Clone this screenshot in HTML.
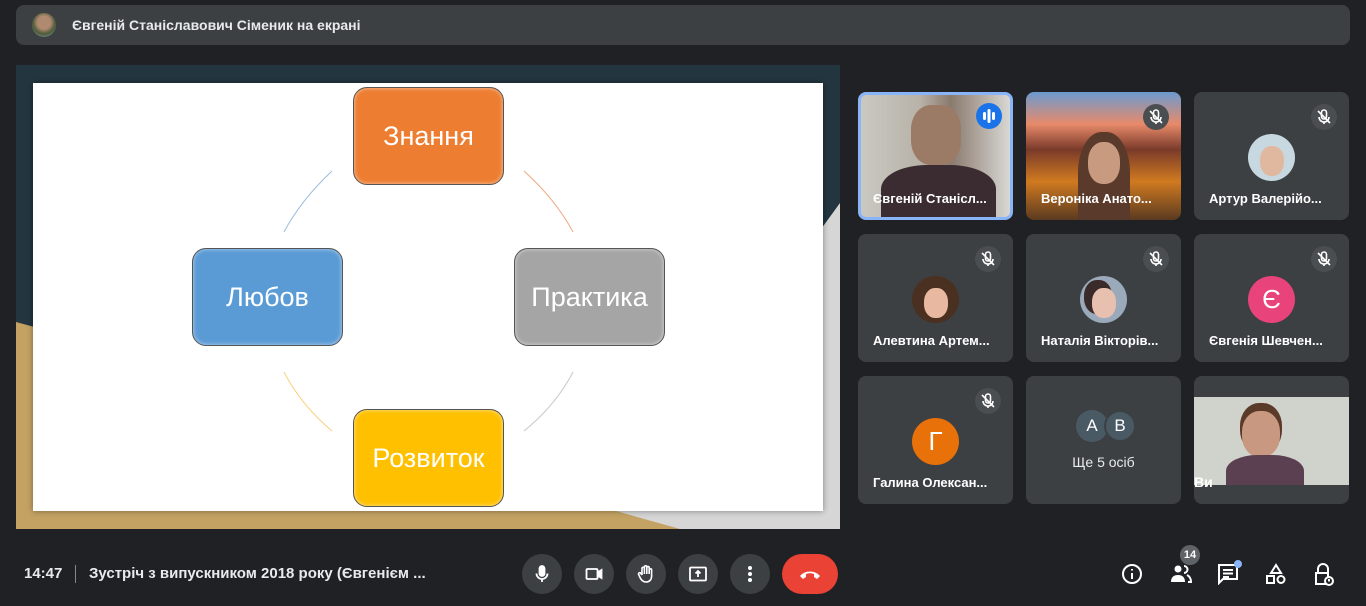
<!DOCTYPE html>
<html><head><meta charset="utf-8"><style>
*{margin:0;padding:0;box-sizing:border-box}
body{width:1366px;height:606px;background:#202124;font-family:"Liberation Sans",sans-serif;position:relative;overflow:hidden;color:#fff}
.top{position:absolute;left:16px;top:5px;width:1334px;height:40px;background:#3c4043;border-radius:8px}
.top .av{position:absolute;left:16px;top:8px;width:24px;height:24px;border-radius:50%;background:radial-gradient(circle at 50% 40%,#b08a70 0 35%,#4d5a3a 60%,#8aa 100%)}
.top span{position:absolute;left:56px;top:12px;font-size:14px;font-weight:bold;color:#e8eaed}
.slide{position:absolute;left:16px;top:65px;width:824px;height:464px;background:#23363f;overflow:hidden}
.box{position:absolute;width:151px;height:98px;border-radius:14px;border:1.5px solid #555;color:#fff;font-size:27px;display:flex;align-items:center;justify-content:center;box-shadow:inset 0 0 4px rgba(255,255,255,.6)}
.tile{position:absolute;width:155px;height:128px;background:#3c4043;border-radius:8px;overflow:hidden}
.tile .n{position:absolute;left:15px;bottom:14px;font-size:13px;font-weight:bold;color:#fff;white-space:nowrap}
.mute{position:absolute;right:12px;top:12px;width:26px;height:26px;border-radius:50%;background:#4a4e51}
.mute svg{position:absolute;left:5px;top:5px}
.circ{position:absolute;left:54px;top:42px;width:47px;height:47px;border-radius:50%;display:flex;align-items:center;justify-content:center;font-size:26px}
.btn{position:absolute;top:554px;width:40px;height:40px;border-radius:50%;background:#3c4043}
.btn svg{position:absolute;left:10px;top:10px}
.ic{position:absolute;top:563px}
</style></head><body>
<div class="top"><div class="av"></div><span>Євгеній Станіславович Сіменик на екрані</span></div>

<div class="slide">
<svg width="824" height="464" style="position:absolute;left:0;top:0">
<polygon points="0,257 760,464 0,464" fill="#c4a263"/>
<polygon points="824,138 600,446 664,464 824,464" fill="#d6d6d6"/>
</svg>
<div style="position:absolute;left:17px;top:18px;width:790px;height:428px;background:#fff;box-shadow:0 0 6px rgba(0,0,0,.4)"></div>
<svg width="824" height="464" style="position:absolute;left:0;top:0" fill="none">
<path d="M316 106 Q285 135 268 167" stroke="#9bbde0"/>
<path d="M508 106 Q540 135 557 167" stroke="#f0a880"/>
<path d="M557 307 Q540 340 508 366" stroke="#c8c8c8"/>
<path d="M268 307 Q285 340 316 366" stroke="#f5d27a"/>
</svg>
<div class="box" style="left:337px;top:22px;background:#ed7d31">Знання</div>
<div class="box" style="left:176px;top:183px;background:#5b9bd5">Любов</div>
<div class="box" style="left:498px;top:183px;background:#a5a5a5">Практика</div>
<div class="box" style="left:337px;top:344px;background:#ffc000">Розвиток</div>
</div>

<div class="tile" style="left:858px;top:92px;border:3px solid #8ab4f8;background:linear-gradient(90deg,#c9c9c2 0,#b8b2a8 40%,#8a7a6e 60%,#d8d8d4 100%)">
<div style="position:absolute;left:50px;top:10px;width:50px;height:60px;border-radius:40%;background:#9b7a66"></div>
<div style="position:absolute;left:20px;top:70px;width:115px;height:60px;border-radius:40% 40% 0 0;background:#3a2c30"></div>
<div style="position:absolute;right:8px;top:8px;width:26px;height:26px;border-radius:50%;background:#1a73e8"><svg width="26" height="26"><rect x="7" y="9" width="3" height="8" rx="1.5" fill="#fff"/><rect x="11.5" y="6" width="3" height="14" rx="1.5" fill="#fff"/><rect x="16" y="9" width="3" height="8" rx="1.5" fill="#fff"/></svg></div>
<div class="n" style="left:12px;bottom:11px">Євгеній Станісл...</div></div>

<div class="tile" style="left:1026px;top:92px;background:linear-gradient(180deg,#6a9ad0 0,#e88a6a 25%,#7a3a2a 45%,#d07a20 70%,#5a3a20 100%)">
<div style="position:absolute;left:52px;top:40px;width:52px;height:90px;border-radius:45% 45% 0 0;background:#5a3a2a"></div>
<div style="position:absolute;left:62px;top:50px;width:32px;height:42px;border-radius:45%;background:#c89a80"></div>
<div class="mute"><svg width="16" height="16" fill="none" stroke="#fff" stroke-width="1.6"><rect x="5.5" y="1" width="5" height="9" rx="2.5"/><path d="M3 8a5 5 0 0 0 10 0M8 13v2M2 2l12 12"/></svg></div>
<div class="n">Вероніка Анато...</div></div>

<div class="tile" style="left:1194px;top:92px"><div class="circ" style="background:#c8d8e0"><div style="width:24px;height:30px;border-radius:45%;background:#e0b8a0;margin-top:6px"></div></div>
<div class="mute"><svg width="16" height="16" fill="none" stroke="#fff" stroke-width="1.6"><rect x="5.5" y="1" width="5" height="9" rx="2.5"/><path d="M3 8a5 5 0 0 0 10 0M8 13v2M2 2l12 12"/></svg></div>
<div class="n">Артур Валерійо...</div></div>

<div class="tile" style="left:858px;top:234px"><div class="circ" style="background:#4a3020"><div style="width:24px;height:30px;border-radius:45%;background:#e8b8a0;margin-top:6px"></div></div>
<div class="mute"><svg width="16" height="16" fill="none" stroke="#fff" stroke-width="1.6"><rect x="5.5" y="1" width="5" height="9" rx="2.5"/><path d="M3 8a5 5 0 0 0 10 0M8 13v2M2 2l12 12"/></svg></div>
<div class="n">Алевтина Артем...</div></div>

<div class="tile" style="left:1026px;top:234px"><div class="circ" style="background:#9aaabb"><div style="width:24px;height:30px;border-radius:45%;background:#e8c0b0;margin-top:6px;box-shadow:-6px -6px 0 2px #3a2a2a"></div></div>
<div class="mute"><svg width="16" height="16" fill="none" stroke="#fff" stroke-width="1.6"><rect x="5.5" y="1" width="5" height="9" rx="2.5"/><path d="M3 8a5 5 0 0 0 10 0M8 13v2M2 2l12 12"/></svg></div>
<div class="n">Наталія Вікторів...</div></div>

<div class="tile" style="left:1194px;top:234px"><div class="circ" style="background:#e8437a">Є</div>
<div class="mute"><svg width="16" height="16" fill="none" stroke="#fff" stroke-width="1.6"><rect x="5.5" y="1" width="5" height="9" rx="2.5"/><path d="M3 8a5 5 0 0 0 10 0M8 13v2M2 2l12 12"/></svg></div>
<div class="n">Євгенія Шевчен...</div></div>

<div class="tile" style="left:858px;top:376px"><div class="circ" style="background:#e8710a">Г</div>
<div class="mute"><svg width="16" height="16" fill="none" stroke="#fff" stroke-width="1.6"><rect x="5.5" y="1" width="5" height="9" rx="2.5"/><path d="M3 8a5 5 0 0 0 10 0M8 13v2M2 2l12 12"/></svg></div>
<div class="n">Галина Олексан...</div></div>

<div class="tile" style="left:1026px;top:376px">
<div style="position:absolute;left:50px;top:34px;width:32px;height:32px;border-radius:50%;background:#4a5a65;display:flex;align-items:center;justify-content:center;font-size:17px">A</div>
<div style="position:absolute;left:78px;top:34px;width:32px;height:32px;border-radius:50%;background:#4a5a65;border:2px solid #3c4043;display:flex;align-items:center;justify-content:center;font-size:17px">B</div>
<div style="position:absolute;left:0;width:155px;top:78px;text-align:center;font-size:14px;color:#e8eaed">Ще 5 осіб</div></div>

<div class="tile" style="left:1194px;top:376px"><div style="position:absolute;left:0;top:21px;width:155px;height:88px;background:#d0d2cc;overflow:hidden">
<div style="position:absolute;left:48px;top:14px;width:38px;height:46px;border-radius:45%;background:#c89880;box-shadow:0 -6px 0 2px #5a3a28"></div>
<div style="position:absolute;left:32px;top:58px;width:78px;height:40px;border-radius:40% 40% 0 0;background:#5a4050"></div></div>
<div class="n" style="left:0;bottom:14px;font-size:14px">Ви</div></div>

<div style="position:absolute;left:24px;top:565px;font-size:15px;font-weight:bold;color:#e8eaed">14:47</div>
<div style="position:absolute;left:75px;top:565px;width:1px;height:18px;background:#888"></div>
<div style="position:absolute;left:89px;top:565px;font-size:15px;font-weight:bold;color:#e8eaed">Зустріч з випускником 2018 року (Євгенієм ...</div>

<div class="btn" style="left:522px"><svg width="20" height="20" fill="none" stroke="#fff" stroke-width="1.8"><rect x="7.5" y="2" width="5" height="10" rx="2.5" fill="#fff"/><path d="M4.5 9.5a5.5 5.5 0 0 0 11 0M10 15v3"/></svg></div>
<div class="btn" style="left:574px"><svg width="20" height="20" fill="none" stroke="#fff" stroke-width="1.8"><rect x="2.5" y="5" width="11" height="10" rx="1"/><path d="M13.5 8.5l4-2.5v8l-4-2.5" fill="#fff"/></svg></div>
<div class="btn" style="left:626px"><svg width="20" height="20" fill="none" stroke="#fff" stroke-width="1.6"><path d="M6 11V4.5a1.2 1.2 0 0 1 2.4 0V10M8.4 10V3a1.2 1.2 0 0 1 2.4 0v7M10.8 10V3.8a1.2 1.2 0 0 1 2.4 0V10M13.2 10V6a1.2 1.2 0 0 1 2.4 0v6c0 4-2.5 6-5.5 6S5 16 3.5 12.5l-1-2.5a1.2 1.2 0 0 1 2-1L6 11"/></svg></div>
<div class="btn" style="left:678px"><svg width="20" height="20" fill="none" stroke="#fff" stroke-width="1.8"><rect x="2" y="3.5" width="16" height="13" rx="1"/><path d="M10 13V7M7.5 9.5L10 7l2.5 2.5" fill="#fff"/></svg></div>
<div class="btn" style="left:730px"><svg width="20" height="20" fill="#fff"><circle cx="10" cy="4" r="2"/><circle cx="10" cy="10" r="2"/><circle cx="10" cy="16" r="2"/></svg></div>
<div style="position:absolute;left:782px;top:554px;width:56px;height:40px;border-radius:20px;background:#ea4335"><svg width="24" height="14" style="position:absolute;left:16px;top:13px" fill="#fff"><path d="M2 9c5-6 15-6 20 0l-3 3-3-2V7c-3-1-5-1-8 0v3l-3 2z"/></svg></div>

<svg class="ic" style="left:1121px" width="22" height="22" fill="none" stroke="#fff" stroke-width="2"><circle cx="11" cy="11" r="9"/><path d="M11 10v6M11 6v1.5"/></svg>
<svg class="ic" style="left:1169px" width="24" height="22" fill="#fff"><circle cx="9" cy="6" r="3.5"/><path d="M2 19c0-5 3-7 7-7s7 2 7 7z"/><path d="M15 3a3.5 3.5 0 0 1 0 7M18 12c2 1 4 3 4 7h-3" fill="none" stroke="#fff" stroke-width="2"/></svg>
<div style="position:absolute;left:1180px;top:545px;width:20px;height:20px;border-radius:50%;background:#5f6368;font-size:11px;font-weight:bold;text-align:center;line-height:20px">14</div>
<svg class="ic" style="left:1217px" width="22" height="22" fill="none" stroke="#fff" stroke-width="2"><path d="M2 2h18v14H6l-4 4zM6 7h10M6 10.5h10M6 14h6"/></svg>
<div style="position:absolute;left:1234px;top:560px;width:8px;height:8px;border-radius:50%;background:#8ab4f8"></div>
<svg class="ic" style="left:1265px" width="22" height="22" fill="none" stroke="#fff" stroke-width="2"><path d="M11 2l5 8H6z"/><rect x="2" y="13" width="7" height="7"/><circle cx="16" cy="16.5" r="3.5"/></svg>
<svg class="ic" style="left:1313px" width="22" height="24" fill="none" stroke="#fff" stroke-width="2"><path d="M5 10V6a5 5 0 0 1 10 0v4M3 10h12v11H3z"/><circle cx="16" cy="18" r="4" fill="#202124"/><path d="M16 16v2.5"/></svg>
</body></html>
